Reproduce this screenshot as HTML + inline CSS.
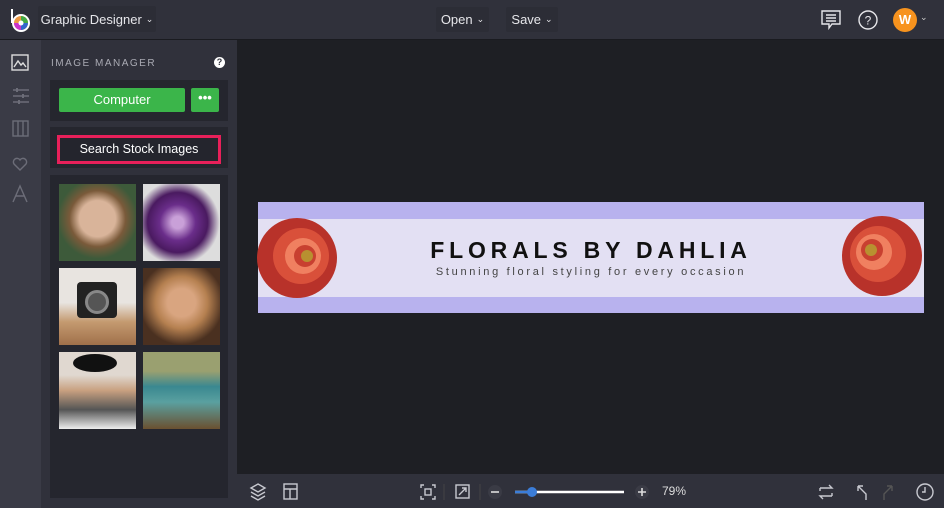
<!DOCTYPE html>
<html><head><style>
*{margin:0;padding:0;box-sizing:border-box}
body{width:944px;height:508px;overflow:hidden;background:#1e1f24;font-family:"Liberation Sans",sans-serif;position:relative}
.a{position:absolute}
.top{left:0;top:0;width:944px;height:40px;background:#30313b;border-bottom:1px solid #1a1b20}
.btn{background:#2c2d36;color:#e6e6ea;font-size:13px;border-radius:2px;display:flex;align-items:center;justify-content:center}
.rail{left:0;top:40px;width:41px;height:468px;background:#3a3b46}
.panel{left:41px;top:40px;width:196px;height:468px;background:#30313b}
.box{background:#25262e}
.img{width:77px;height:77px}
.bot{left:237px;top:474px;width:707px;height:34px;background:#30313b}
.ic{fill:none;stroke-width:1.4}
svg{stroke:#c8c9d0}
.dim{stroke:#6c6d78}
</style></head><body>
<div class="a top"></div>
<svg class="a" style="left:9px;top:8px;stroke:none" width="24" height="26"><line x1="3" y1="1" x2="3" y2="15" stroke="#fff" stroke-width="2"/><circle cx="12" cy="15" r="9" fill="#fff"/><circle cx="12" cy="15" r="7" fill="#e94"/><path d="M12 15 L12 8 A7 7 0 0 1 19 15Z" fill="#4a4"/><path d="M12 15 L19 15 A7 7 0 0 1 12 22Z" fill="#36c"/><path d="M12 15 L12 22 A7 7 0 0 1 5 15Z" fill="#c3c"/><circle cx="12" cy="15" r="2.5" fill="#fff"/></svg>
<div class="a btn" style="left:38px;top:6px;width:118px;height:26px">Graphic Designer <span style="font-size:9px;margin-left:4px">⌄</span></div>
<div class="a btn" style="left:436px;top:7px;width:53px;height:25px">Open <span style="font-size:9px;margin-left:4px">⌄</span></div>
<div class="a btn" style="left:506px;top:7px;width:52px;height:25px">Save <span style="font-size:9px;margin-left:4px">⌄</span></div>
<svg class="a" style="left:820px;top:9px;stroke:#e6e6ea" width="22" height="22"><path d="M2 2h18v13h-8l-3 4v-4H2z" class="ic"/><path d="M6 6h10M6 9h10M6 12h10" class="ic"/></svg>
<svg class="a" style="left:857px;top:9px;stroke:#e6e6ea" width="22" height="22"><circle cx="11" cy="11" r="9" class="ic"/><text x="11" y="15.5" text-anchor="middle" font-size="12" fill="#e6e6ea" stroke="none" font-family="Liberation Sans">?</text></svg>
<div class="a" style="left:893px;top:8px;width:24px;height:24px;border-radius:50%;background:#f7931e;color:#fff;font-weight:bold;font-size:13px;text-align:center;line-height:24px">W</div>
<div class="a" style="left:920px;top:12px;color:#ccc;font-size:9px">⌄</div>

<div class="a rail"></div>
<svg class="a" style="left:11px;top:54px" width="20" height="160"><rect x="1" y="1" width="16" height="15" class="ic" style="stroke:#ddd"/><path d="M3 13l4-6 3 4 2-2 3 4" class="ic" style="stroke:#ddd"/><g class="dim"><path d="M2 36h16M2 42h16M2 48h16" class="ic"/><rect x="2" y="67" width="15" height="15" class="ic"/><path d="M7 67v15M12 67v15" class="ic"/><path d="M9 116l-6-6a3.5 3.5 0 0 1 6-4a3.5 3.5 0 0 1 6 4z" class="ic"/><path d="M2 148l7-16 7 16M5 142h8" class="ic"/></g><rect x="5" y="34" width="2" height="4" fill="#6c6d78" stroke="none"/><rect x="11" y="40" width="2" height="4" fill="#6c6d78" stroke="none"/><rect x="7" y="46" width="2" height="4" fill="#6c6d78" stroke="none"/></svg>

<div class="a panel"></div>
<div class="a" style="left:51px;top:58px;color:#a9aab3;font-size:10px;letter-spacing:1.5px">IMAGE MANAGER</div>
<div class="a" style="left:214px;top:57px;width:11px;height:11px;border-radius:50%;background:#fff;color:#30313b;font-size:9px;font-weight:bold;text-align:center;line-height:11px">?</div>
<div class="a box" style="left:50px;top:80px;width:178px;height:41px"></div>
<div class="a" style="left:59px;top:88px;width:126px;height:24px;background:#3bb54a;color:#fff;font-size:13px;text-align:center;line-height:24px;border-radius:2px">Computer</div>
<div class="a" style="left:191px;top:88px;width:28px;height:24px;background:#3bb54a;color:#fff;font-size:13px;text-align:center;line-height:20px;border-radius:2px;font-weight:bold">•••</div>
<div class="a box" style="left:50px;top:127px;width:178px;height:41px"></div>
<div class="a" style="left:57px;top:135px;width:164px;height:29px;border:3px solid #e8205a;background:#24252d;color:#fff;font-size:12.5px;text-align:center;line-height:23px">Search Stock Images</div>
<div class="a box" style="left:50px;top:175px;width:178px;height:323px"></div>
<div class="a img" style="left:59px;top:184px;background:radial-gradient(circle at 50% 45%,#d9b49a 0 18px,#7a5a3a 28px,#3d5a3a 40px)"></div>
<div class="a img" style="left:143px;top:184px;background:radial-gradient(circle at 45% 50%,#c9a0d8 0 6px,#6a2d8a 18px,#4a1a60 30px,#ddd 42px)"></div>
<div class="a img" style="left:59px;top:268px;background:linear-gradient(#e8e4e0 0 45%,#c49a70 70%,#a0704a);"><div class="a" style="left:18px;top:14px;width:40px;height:36px;background:#222;border-radius:4px"></div><div class="a" style="left:26px;top:22px;width:24px;height:24px;border-radius:50%;background:#555;border:3px solid #888"></div></div>
<div class="a img" style="left:143px;top:268px;background:radial-gradient(circle at 50% 45%,#d9a580 0 14px,#b58050 26px,#4a3020 42px)"></div>
<div class="a img" style="left:59px;top:352px;background:linear-gradient(#e0d8d0 0 30%,#c8a080 50%,#555 75%,#eee)"><div class="a" style="left:14px;top:2px;width:44px;height:18px;background:#111;border-radius:50%"></div></div>
<div class="a img" style="left:143px;top:352px;background:linear-gradient(#9aa070 0 25%,#3a8890 45%,#5aa0a0 65%,#6a5030)"></div>

<div class="a" style="left:258px;top:202px;width:666px;height:111px;background:#b8b2ee"></div>
<div class="a" style="left:258px;top:219px;width:666px;height:78px;background:#e3e0f3"></div>
<div class="a" style="left:258px;top:237px;width:666px;text-align:center;font-weight:bold;font-size:23px;letter-spacing:4.8px;color:#111">FLORALS BY DAHLIA</div>
<div class="a" style="left:258px;top:266px;width:666px;text-align:center;font-size:11px;letter-spacing:2.7px;color:#444">Stunning floral styling for every occasion</div>
<svg class="a" style="left:257px;top:210px;stroke:none" width="88" height="96"><circle cx="40" cy="48" r="40" fill="#b8322a"/><circle cx="44" cy="46" r="28" fill="#d9503a"/><circle cx="46" cy="46" r="18" fill="#f08060"/><circle cx="48" cy="46" r="11" fill="#c84030"/><circle cx="50" cy="46" r="6" fill="#b89030"/></svg>
<svg class="a" style="left:838px;top:210px;stroke:none" width="88" height="96"><circle cx="44" cy="46" r="40" fill="#b8322a"/><circle cx="40" cy="44" r="28" fill="#d9503a"/><circle cx="36" cy="42" r="18" fill="#f08060"/><circle cx="34" cy="40" r="11" fill="#c84030"/><circle cx="33" cy="40" r="6" fill="#b89030"/></svg>

<div class="a bot"></div>
<svg class="a" style="left:248px;top:482px" width="700" height="20">
<path d="M10 2l7 4-7 4-7-4z M3 10l7 4 7-4 M3 14l7 4 7-4" class="ic"/>
<rect x="36" y="2" width="13" height="15" class="ic"/><path d="M36 7h13M42 7v10" class="ic"/>
<path d="M176 3h-3v3M184 3h3v3M176 17h-3v-3M184 17h3v-3" class="ic"/><rect x="177" y="7" width="6" height="6" class="ic"/>
<line x1="196" y1="2" x2="196" y2="18" stroke="#444"/>
<rect x="208" y="3" width="13" height="13" class="ic"/><path d="M211 13l7-7M214 6h4v4" class="ic"/>
<line x1="232" y1="2" x2="232" y2="18" stroke="#444"/>
<circle cx="247" cy="10" r="7" fill="#3a3b45" stroke="none"/><path d="M243 10h8" stroke="#ddd" stroke-width="1.6"/>
<line x1="267" y1="10" x2="376" y2="10" stroke="#fff" stroke-width="2.5"/><line x1="267" y1="10" x2="284" y2="10" stroke="#3b7dd8" stroke-width="2.5"/><circle cx="284" cy="10" r="5" fill="#3b7dd8" stroke="none"/>
<circle cx="394" cy="10" r="7" fill="#3a3b45" stroke="none"/><path d="M390 10h8M394 6v8" stroke="#ddd" stroke-width="1.6"/>
<path d="M572 6h12l-3-3M584 14h-12l3 3M572 6v3M584 14v-3" class="ic"/>
<path d="M618 18v-6l-8-8M610 4v5M610 4h5" class="ic"/>
<path d="M636 18v-6l8-8M644 4v5M644 4h-5" class="ic" style="stroke:#555"/>
<circle cx="677" cy="10" r="8" class="ic"/><path d="M677 5v5h-3" class="ic"/>
</svg>
<div class="a" style="left:662px;top:484px;color:#ddd;font-size:12px">79%</div>
</body></html>
